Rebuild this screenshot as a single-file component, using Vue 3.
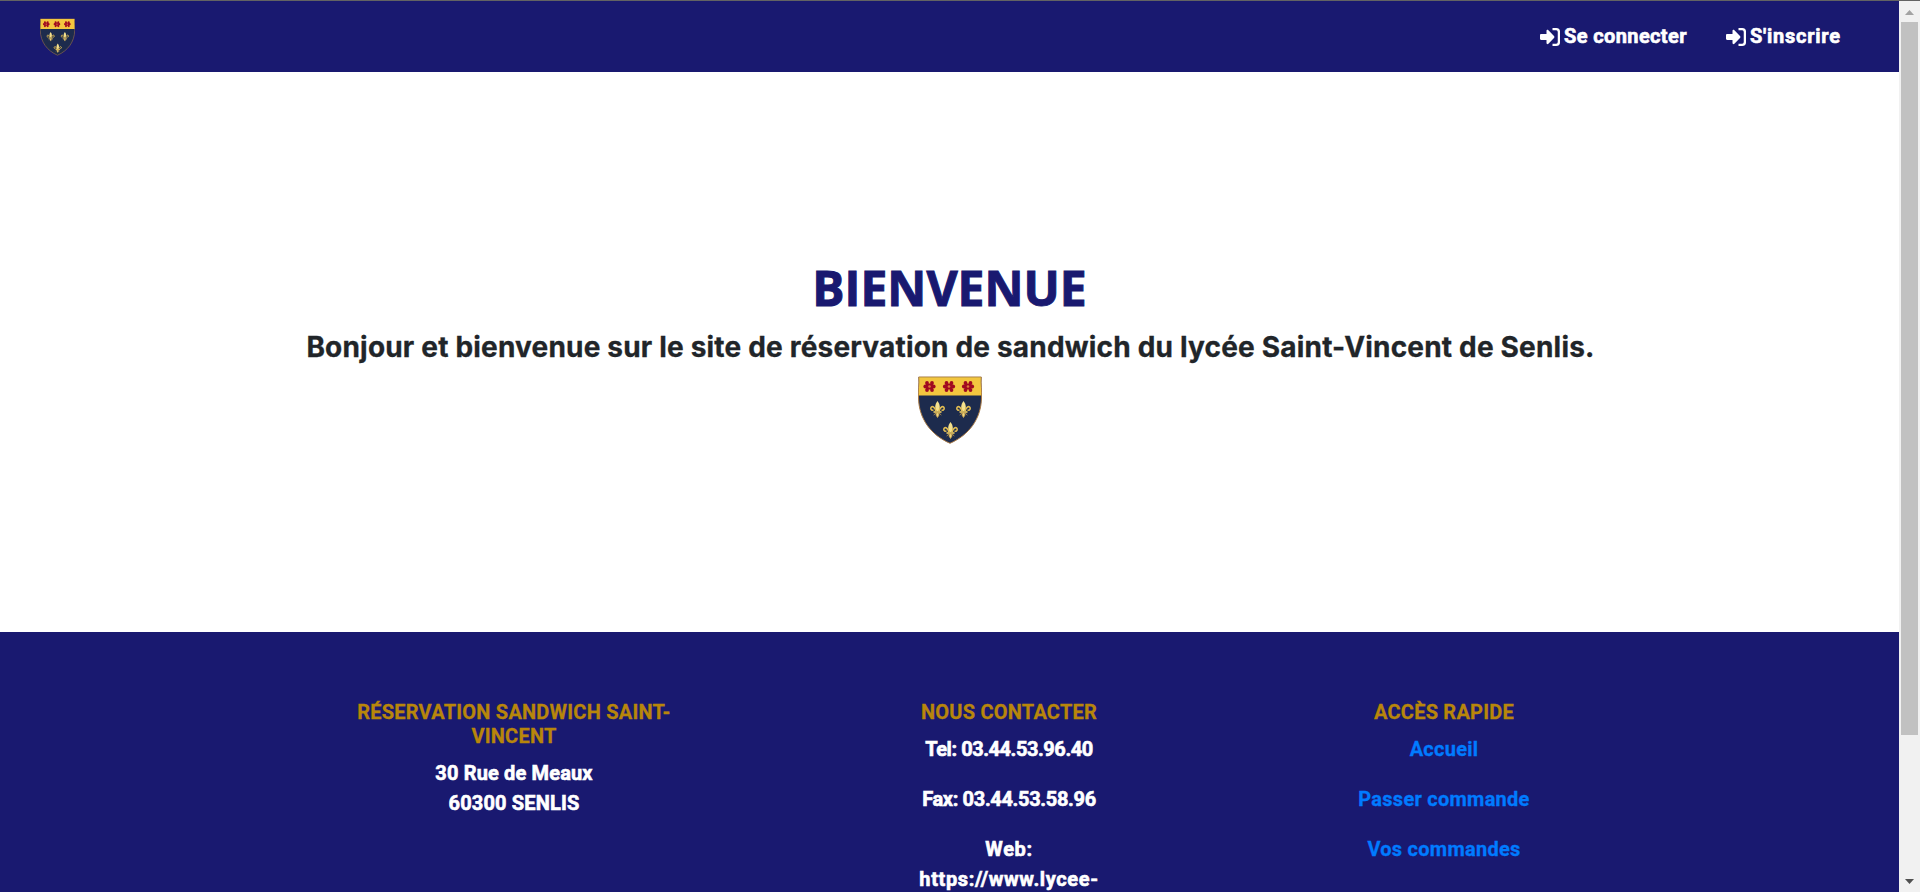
<script setup>
const roses = [11.5, 31, 50]
const lilies = [[19.5, 33], [45.5, 33], [32.5, 54]]
const nav = [
  { label: 'Se connecter', cls: 'login' },
  { label: "S'inscrire", cls: 'signup' },
]
</script>

<template>
  <div class="window">
    <svg class="defs" width="0" height="0" aria-hidden="true">
      <symbol id="crest" viewBox="0 0 64 68">
        <path d="M.7 1H63.3C62.8 8 63.8 14 63.5 22C63 43 51 59 32 67.3C13 59 1 43 .5 22C.2 14 1.2 8 .7 1Z" fill="#1d2b4d" stroke="#a87945" stroke-width="1" />
        <path d="M1.1 1.2H62.9C62.5 8 63.3 13 63.2 19.5H.8C.7 13 1.5 8 1.1 1.2Z" fill="#f3c63f" />
        <g v-for="x in roses" :key="x" :transform="`translate(${x} 10.5)`" fill="#a00a20">
          <circle cx="-4.2" cy="0" r="1.9" /><circle cx="4.2" cy="0" r="1.9" />
          <circle cx="-2.5" cy="-3.6" r="1.9" /><circle cx="2.5" cy="-3.6" r="1.9" />
          <circle cx="-2.5" cy="3.6" r="1.9" /><circle cx="2.5" cy="3.6" r="1.9" />
          <rect x="-3.5" y="-3" width="7" height="6" />
          <circle r="1.3" fill="#dc7a35" />
        </g>
        <g v-for="(p, i) in lilies" :key="i" :transform="`translate(${p[0]} ${p[1]})`">
          <path d="M0-8C3-4 2.7-1 1.2 2H-1.2C-2.7-1-3-4 0-8Z" fill="#f5e18c" />
          <path d="M-1.6 2.2C-2-2-6-4-6.7-.8C-6.9 1-5 1.8-4.2.6M1.6 2.2C2-2 6-4 6.7-.8C6.9 1 5 1.8 4.2.6" fill="none" stroke="#e2bd52" stroke-width="1.6" />
          <path d="M-4 2.2H4V3.8H-4Z" fill="#f0cd62" />
          <path d="M-1 3.8H1L1.5 6L0 8.5L-1.5 6ZM-1.5 4L-3.8 6M1.5 4L3.8 6" fill="#efd681" stroke="#cba34a" stroke-width=".8" />
        </g>
      </symbol>
    </svg>

    <div class="page">
      <header class="navbar">
        <svg class="brand"><use href="#crest" /></svg>
        <nav class="links">
          <a v-for="n in nav" :key="n.cls" :class="n.cls">
            <svg class="icon" viewBox="0 0 20 20" aria-hidden="true">
              <path d="M1.2 7H6.5V3.9C6.5 2.9 7.7 2.5 8.4 3.2L14 9C14.5 9.6 14.5 10.4 14 11L8.4 16.8C7.7 17.5 6.5 17.1 6.5 16.1V13H1.2C.5 13 0 12.5 0 11.8V8.2C0 7.5.5 7 1.2 7Z" fill="#fff" />
              <path d="M12.5 2.2H16.2C17.9 2.2 18.9 3.2 18.9 4.9V15.1C18.9 16.8 17.9 17.8 16.2 17.8H12.5" fill="none" stroke="#fff" stroke-width="2.3" />
            </svg>
            <span>{{ n.label }}</span>
          </a>
        </nav>
      </header>

      <main class="hero">
        <h1>BIENVENUE</h1>
        <h3>Bonjour et bienvenue sur le site de réservation de sandwich du lycée Saint-Vincent de Senlis.</h3>
        <svg class="shield"><use href="#crest" /></svg>
      </main>

      <footer class="footer">
        <section>
          <h5>RÉSERVATION SANDWICH SAINT-<br>VINCENT</h5>
          <p class="address">30 Rue de Meaux<br>60300 SENLIS</p>
        </section>
        <section class="spaced">
          <h5>NOUS CONTACTER</h5>
          <p class="tel">Tel: 03.44.53.96.40</p>
          <p class="fax">Fax: 03.44.53.58.96</p>
          <p class="web">Web:<br>https://www.lycee-</p>
        </section>
        <section class="spaced">
          <h5>ACCÈS RAPIDE</h5>
          <p><a>Accueil</a></p>
          <p><a>Passer commande</a></p>
          <p><a>Vos commandes</a></p>
        </section>
      </footer>
    </div>

    <div class="scrollbar">
      <svg class="arrow" viewBox="0 0 9 5"><path d="M4.5 0L9 5H0Z" fill="#a3a3a3" /></svg>
      <div class="thumb"></div>
      <svg class="arrow" viewBox="0 0 9 5"><path d="M0 0H9L4.5 5Z" fill="#505050" /></svg>
    </div>
  </div>
</template>

<style>
html, body { margin: 0; overflow: hidden; }
</style>

<style scoped>
.window {
  box-sizing: border-box;
  display: flex;
  width: 1920px;
  height: 892px;
  overflow: hidden;
  border-top: 1px solid #636363;
  background: #fff;
  font-family: Roboto, Inter, "Liberation Sans", sans-serif;
  font-size: 20px;
  font-weight: 700;
  line-height: 30px;
  white-space: nowrap;
}
.defs { position: absolute; }
.page { display: flex; flex-direction: column; width: 1899px; height: 891px; }
.navbar {
  box-sizing: border-box;
  display: flex;
  align-items: center;
  justify-content: space-between;
  height: 71px;
  flex: none;
  padding: 0 0 0 40px;
  background: #191970;
}
.brand { width: 35px; height: 38px; }
.links { display: flex; width: 359px; color: #fff; }
.links a { display: flex; align-items: center; gap: 4px; width: 186px; flex: none; }
.links span { padding-bottom: 1px; -webkit-text-stroke: .6px currentColor; }
.login { letter-spacing: .38px; }
.signup { letter-spacing: .74px; }
.icon { width: 20px; height: 20px; flex: none; }
.hero {
  box-sizing: border-box;
  display: flex;
  flex-direction: column;
  align-items: center;
  height: 560px;
  flex: none;
  padding-top: 187px;
}
h1, h3, h5, p { margin: 0; font-weight: 700; }
h1 {
  margin-bottom: 13px;
  color: #191970;
  font-family: "Open Sans", "Noto Sans", sans-serif;
  font-size: 48px;
  line-height: 58px;
  -webkit-text-stroke: 1px currentColor;
}
h3 {
  margin-bottom: 12px;
  color: #212529;
  font-family: Inter, Roboto, sans-serif;
  font-size: 28px;
  line-height: 34px;
  letter-spacing: .19px;
  text-indent: 2px;
  -webkit-text-stroke: .3px currentColor;
}
.shield { width: 64px; height: 68px; }
.footer {
  display: grid;
  grid-template-columns: 340px 180px 180px;
  column-gap: 235px;
  align-items: start;
  flex: 1;
  min-height: 0;
  box-sizing: border-box;
  padding: 68px 0 0 344px;
  overflow: hidden;
  background: #191970;
  color: #fff;
  text-align: center;
}
.footer section { display: flex; flex-direction: column; align-items: center; }
.footer section:last-child { margin: 0 -20px 0 20px; }
h5 {
  margin-bottom: 10px;
  color: #b8860b;
  font-size: 20px;
  line-height: 24px;
  letter-spacing: .22px;
  -webkit-text-stroke: .3px currentColor;
}
.footer p { -webkit-text-stroke: .6px currentColor; }
.spaced p { margin-bottom: 20px; }
.footer a { color: #007bff; letter-spacing: .26px; -webkit-text-stroke: .3px currentColor; }
.address { letter-spacing: .15px; }
.tel { letter-spacing: -.45px; }
.fax { letter-spacing: -.34px; }
.web { letter-spacing: .62px; }
.scrollbar {
  box-sizing: border-box;
  display: flex;
  flex-direction: column;
  align-items: center;
  width: 21px;
  padding: 9px 0 8px;
  background: #f1f1f1;
}
.arrow { width: 9px; height: 5px; flex: none; }
.thumb { width: 17px; height: 713px; margin: 7px 0 auto; background: #c1c1c1; }
</style>
